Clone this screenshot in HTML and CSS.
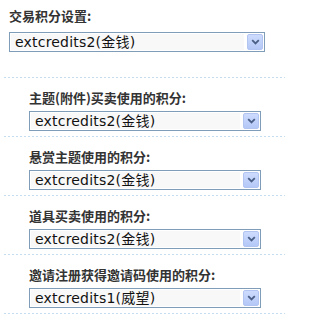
FILE: index.html
```html
<!DOCTYPE html>
<html lang="zh-CN">
<head>
<meta charset="utf-8">
<title>交易积分设置</title>
<link rel="stylesheet" href="styles.css">
</head>
<body>
<div class="panel">
  <section class="row row-main">
    <h3 class="label">交易积分设置:</h3>
    <div class="select select-wide">
      <span class="value">extcredits2(金钱)</span>
      <span class="btn"><svg width="9" height="6" viewBox="0 0 9 6"><path d="M1.2 1.2 L4.5 4.5 L7.8 1.2" fill="none" stroke="#4a5f86" stroke-width="1.8"/></svg></span>
    </div>
  </section>
  <div class="sep"></div>
  <section class="row row-sub">
    <h3 class="label">主题(附件)买卖使用的积分:</h3>
    <div class="select">
      <span class="value">extcredits2(金钱)</span>
      <span class="btn"><svg width="9" height="6" viewBox="0 0 9 6"><path d="M1.2 1.2 L4.5 4.5 L7.8 1.2" fill="none" stroke="#4a5f86" stroke-width="1.8"/></svg></span>
    </div>
  </section>
  <div class="sep"></div>
  <section class="row row-sub">
    <h3 class="label">悬赏主题使用的积分:</h3>
    <div class="select">
      <span class="value">extcredits2(金钱)</span>
      <span class="btn"><svg width="9" height="6" viewBox="0 0 9 6"><path d="M1.2 1.2 L4.5 4.5 L7.8 1.2" fill="none" stroke="#4a5f86" stroke-width="1.8"/></svg></span>
    </div>
  </section>
  <div class="sep"></div>
  <section class="row row-sub">
    <h3 class="label">道具买卖使用的积分:</h3>
    <div class="select">
      <span class="value">extcredits2(金钱)</span>
      <span class="btn"><svg width="9" height="6" viewBox="0 0 9 6"><path d="M1.2 1.2 L4.5 4.5 L7.8 1.2" fill="none" stroke="#4a5f86" stroke-width="1.8"/></svg></span>
    </div>
  </section>
  <div class="sep"></div>
  <section class="row row-sub">
    <h3 class="label">邀请注册获得邀请码使用的积分:</h3>
    <div class="select">
      <span class="value">extcredits1(威望)</span>
      <span class="btn"><svg width="9" height="6" viewBox="0 0 9 6"><path d="M1.2 1.2 L4.5 4.5 L7.8 1.2" fill="none" stroke="#4a5f86" stroke-width="1.8"/></svg></span>
    </div>
  </section>
  <div class="sep"></div>
</div>
</body>
</html>
```

FILE: styles.css
```css
html, body {
  margin: 0;
  padding: 0;
  background: #ffffff;
}

.panel {
  width: 285px;
  display: flex;
  flex-direction: column;
}

.row {
  display: flex;
  flex-direction: column;
  align-items: flex-start;
}

.row-main {
  padding: 8px 0 25px 9px;
  gap: 8px;
}

.row-sub {
  padding: 12px 0 5px 29px;
  gap: 5px;
}

.label {
  margin: 0;
  font-family: "Noto Sans CJK SC", "DejaVu Sans", sans-serif;
  font-weight: bold;
  font-size: 13px;
  line-height: 16px;
  color: #333333;
}

.sep {
  height: 1px;
  margin-left: 4px;
  background: repeating-linear-gradient(to right, #c6dcef 0, #c6dcef 2px, transparent 2px, transparent 4px);
}

.select {
  box-sizing: border-box;
  width: 232px;
  height: 20px;
  border: 1px solid #7f9db9;
  background: #ffffff;
  display: flex;
  align-items: center;
  padding: 1px;
}

.select-wide {
  width: 256px;
}

.value {
  flex: 1;
  height: 16px;
  background: #f8f8f8;
  margin-right: 3px;
  padding-left: 4px;
  font-family: "DejaVu Sans", "Noto Sans CJK SC", sans-serif;
  font-size: 14px;
  letter-spacing: 0.2px;
  line-height: 16px;
  color: #111111;
  white-space: nowrap;
  overflow: hidden;
}

.btn {
  box-sizing: border-box;
  width: 16px;
  height: 16px;
  border: 1px solid #b2c4f1;
  border-radius: 2px;
  background: linear-gradient(to bottom, #cddbfd, #b4c8f7);
  display: flex;
  align-items: center;
  justify-content: center;
}
```
